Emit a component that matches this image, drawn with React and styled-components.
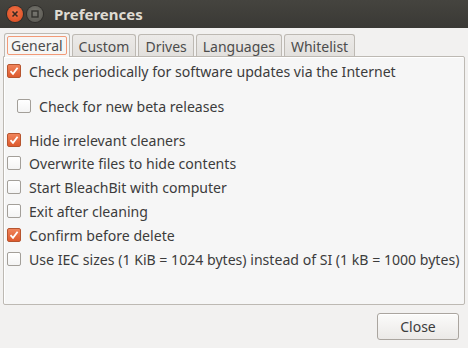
import React from 'react';
import styled, { createGlobalStyle } from 'styled-components';

const GlobalStyle = createGlobalStyle`
  html, body {
    margin: 0;
    padding: 0;
    background: #f2f1f0;
  }
  body {
    font-family: "Noto Sans", "DejaVu Sans", sans-serif;
    color: #3c3c3c;
  }
`;

const Window = styled.div`
  width: 468px;
  height: 348px;
  display: flex;
  flex-direction: column;
  background: #f2f1f0;
  overflow: hidden;
`;

const TitleBar = styled.div`
  height: 28px;
  flex: none;
  display: flex;
  align-items: center;
  padding-left: 7px;
  background: linear-gradient(#45443f, #3a3935);
`;

const WinButton = styled.div`
  width: 16px;
  height: 16px;
  border-radius: 50%;
  margin-right: 4px;
  display: flex;
  align-items: center;
  justify-content: center;
  background: ${p => (p.close ? 'radial-gradient(circle at 50% 40%, #f2744a, #d7481c)' : 'radial-gradient(circle at 50% 40%, #76756f, #57564f)')};
  box-shadow: 0 0 0 1px #2e2d2a;
`;

const Title = styled.div`
  margin-left: 7px;
  font-weight: bold;
  font-size: 15px;
  color: #dfdbd2;
`;

const Body = styled.div`
  flex: 1;
  display: flex;
  flex-direction: column;
  padding: 5px 3px 8px 3px;
`;

const Tabs = styled.div`
  display: flex;
  gap: 2px;
  padding-left: 1px;
  height: 23px;
  align-items: flex-end;
`;

const Tab = styled.div`
  height: ${p => (p.active ? '24px' : '22px')};
  box-sizing: border-box;
  padding: 2px;
  border: 1px solid #bdb9b3;
  border-bottom: none;
  border-radius: 3px 3px 0 0;
  background: ${p => (p.active ? '#f6f6f5' : 'linear-gradient(#eceae8, #e2e0dd)')};
  margin-bottom: ${p => (p.active ? '-1px' : '0')};
  position: relative;
  z-index: ${p => (p.active ? 1 : 0)};
`;

const TabLabel = styled.div`
  font-size: 14px;
  line-height: 17px;
  padding: 0 3px;
  border: 1px solid ${p => (p.active ? '#f29a78' : 'transparent')};
  border-radius: 2px;
  color: #4c4c4c;
`;

const Panel = styled.div`
  flex: 1;
  background: #f6f6f6;
  border: 1px solid #bdb9b3;
  border-radius: 0 2px 2px 2px;
  box-shadow: inset 1px 1px 0 #ffffff;
  padding-top: 2px;
  display: flex;
  flex-direction: column;
  overflow: hidden;
`;

const Row = styled.label`
  display: flex;
  align-items: center;
  height: ${p => p.h || 24}px;
  padding-left: ${p => (p.indent ? 13 : 3)}px;
  font-size: 14.1px;
  white-space: nowrap;
`;

const Box = styled.span`
  flex: none;
  width: 14px;
  height: 14px;
  box-sizing: border-box;
  border-radius: 2px;
  margin-right: 8px;
  display: flex;
  align-items: center;
  justify-content: center;
  border: 1px solid ${p => (p.checked ? '#b6552f' : '#a39f99')};
  background: ${p => (p.checked ? 'linear-gradient(#f0845b, #de5a2e)' : 'linear-gradient(#ffffff, #f4f4f4)')};
`;

const Footer = styled.div`
  display: flex;
  justify-content: flex-end;
  padding-top: 8px;
  padding-right: 6px;
`;

const Button = styled.button`
  width: 82px;
  height: 27px;
  font-family: inherit;
  font-size: 14px;
  color: #3c3c3c;
  border: 1px solid #aaa59f;
  border-radius: 3px;
  background: linear-gradient(#fbfbfa, #ebe9e7);
  box-shadow: inset 0 1px 0 #ffffff;
`;

const Check = () => (
  <svg width="10" height="10" viewBox="0 0 10 10">
    <path d="M1.5 5.2 L4 7.8 L8.6 1.8" fill="none" stroke="#fff" strokeWidth="1.8" />
  </svg>
);

const CheckRow = ({ checked, indent, h, children }) => (
  <Row indent={indent} h={h}>
    <Box checked={checked}>{checked && <Check />}</Box>
    {children}
  </Row>
);

const options = [
  { label: 'Check periodically for software updates via the Internet', checked: true },
  { label: 'Check for new beta releases', indent: true, h: 46 },
  { label: 'Hide irrelevant cleaners', checked: true, h: 22 },
  { label: 'Overwrite files to hide contents' },
  { label: 'Start BleachBit with computer' },
  { label: 'Exit after cleaning' },
  { label: 'Confirm before delete', checked: true },
  { label: 'Use IEC sizes (1 KiB = 1024 bytes) instead of SI (1 kB = 1000 bytes)' },
];

export default function App() {
  return (
    <Window>
      <GlobalStyle />
      <TitleBar>
        <WinButton close>
          <svg width="8" height="8" viewBox="0 0 8 8">
            <path d="M1.5 1.5 L6.5 6.5 M6.5 1.5 L1.5 6.5" stroke="#3a2a22" strokeWidth="1.6" />
          </svg>
        </WinButton>
        <WinButton>
          <svg width="8" height="8" viewBox="0 0 8 8">
            <rect x="1" y="1" width="6" height="6" fill="none" stroke="#33322e" strokeWidth="1.4" />
          </svg>
        </WinButton>
        <Title>Preferences</Title>
      </TitleBar>
      <Body>
        <Tabs>
          {['General', 'Custom', 'Drives', 'Languages', 'Whitelist'].map((t, i) => (
            <Tab key={t} active={i === 0}>
              <TabLabel active={i === 0}>{t}</TabLabel>
            </Tab>
          ))}
        </Tabs>
        <Panel>
          {options.map(o => (
            <CheckRow key={o.label} checked={o.checked} indent={o.indent} h={o.h}>
              {o.label}
            </CheckRow>
          ))}
        </Panel>
        <Footer>
          <Button>Close</Button>
        </Footer>
      </Body>
    </Window>
  );
}
